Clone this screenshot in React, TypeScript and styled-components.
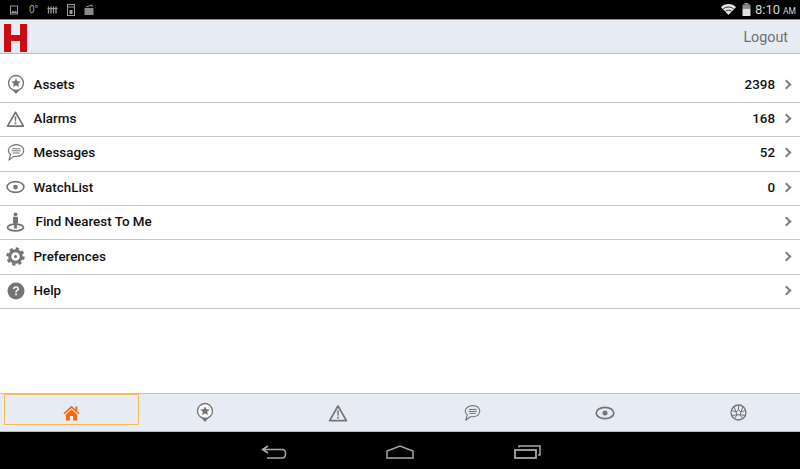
import React from 'react';
import styled, { createGlobalStyle } from 'styled-components';

const GlobalStyle = createGlobalStyle`
  html, body { margin: 0; padding: 0; background: #fff; }
  body { font-family: Roboto, "Liberation Sans", sans-serif; }
`;

const GREY = '#747474';

const PinIcon = ({ size = 18 }: { size?: number }) => (
  <svg width={size} height={size * 1.17} viewBox="0 0 18 21" fill="none">
    <path d="M9 .8a8.200 8.200 0 0 0-3.200 15.700L9 20l3.200-3.500A8.200 8.200 0 0 0 9 .8z" fill={GREY} />
    <circle cx="9" cy="9" r="6.800" fill="#fff" />
    <path d="M9 4.200l1.400 3.100 3.400.3-2.600 2.200.8 3.300L9 11.400l-3 1.700.8-3.300-2.600-2.200 3.400-.3z" fill={GREY} />
  </svg>
);

const AlertIcon = ({ size = 22 }: { size?: number }) => (
  <svg width={size} height={size * 0.9} viewBox="0 0 20 18" fill="none">
    <path d="M10 2L1.600 16.600h16.800z" stroke={GREY} strokeWidth="1.700" strokeLinejoin="round" />
    <path d="M9.100 6.600h1.800l-.3 5.200H9.400zM9.100 12.800h1.800v1.800H9.100z" fill={GREY} />
  </svg>
);

const ChatIcon = ({ size = 19 }: { size?: number }) => (
  <svg width={size} height={size} viewBox="0 0 18 18" fill="none">
    <path d="M9.800 1.600c-4.200 0-7.600 2.400-7.600 5.500 0 1.500.8 2.800 2.100 3.800l-1.500 5.300 4.600-3.500c.8.100 1.600.100 2.400 0 4.100 0 7-2.500 7-5.600s-2.800-5.500-7-5.500z" stroke={GREY} strokeWidth="1.100" strokeLinejoin="round" />
    <path d="M6 5.400h7.600M5.600 7.400h8.200M6.400 9.400h6.400" stroke={GREY} strokeWidth="1" />
  </svg>
);

const EyeIcon = ({ size = 20 }: { size?: number }) => (
  <svg width={size} height={size * 0.7} viewBox="0 0 20 14" fill="none">
    <ellipse cx="10" cy="7" rx="8.800" ry="5.700" stroke={GREY} strokeWidth="1.700" />
    <circle cx="10" cy="7" r="2.500" fill={GREY} />
  </svg>
);

const PersonPinIcon = () => (
  <svg width="19" height="20" viewBox="0 0 19 20" fill="none">
    <ellipse cx="9.500" cy="15.500" rx="8" ry="3.300" stroke={GREY} strokeWidth="1.800" />
    <circle cx="9.500" cy="2.300" r="1.900" fill={GREY} />
    <path d="M7 4.800h5v6.200h-1.100v5.500H8.100V11H7z" fill={GREY} />
  </svg>
);

const GearIcon = () => (
  <svg width="19" height="19" viewBox="0 0 19 19" fill="none">
    <circle cx="9.500" cy="9.500" r="5.800" stroke={GREY} strokeWidth="3" />
    <circle cx="9.500" cy="9.500" r="8" stroke={GREY} strokeWidth="2.400" strokeDasharray="3.200 3.083" />
    <circle cx="9.500" cy="9.500" r="1.500" fill={GREY} />
  </svg>
);

const HelpIcon = () => (
  <svg width="18" height="18" viewBox="0 0 18 18">
    <circle cx="9" cy="9" r="8.500" fill={GREY} />
    <path d="M6 7c0-1.800 1.300-2.800 3-2.800s3 1 3 2.500c0 1.200-.7 1.800-1.500 2.300-.7.500-.9.800-.9 1.500H8.300c0-1.200.3-1.800 1.200-2.400.7-.500 1-.8 1-1.300 0-.6-.6-1-1.400-1-.9 0-1.500.5-1.500 1.300z" fill="#fff" />
    <rect x="8.200" y="11.500" width="1.700" height="1.800" fill="#fff" />
  </svg>
);

const HomeIcon = () => (
  <svg width="17" height="16" viewBox="0 0 17 16">
    <path d="M8.500.8L.4 8.200l1 1.100 7.100-6.400 7.100 6.400 1-1.100-2.300-2.100V1.600h-2v2.700z" fill="#f26a0f" />
    <path d="M8.500 4.400L2.900 9.400v6.100h4v-4.400h3.200v4.400h4V9.400z" fill="#f26a0f" />
  </svg>
);

const GlobeIcon = () => (
  <svg width="17" height="17" viewBox="0 0 17 17" fill="none" stroke={GREY}>
    <circle cx="8.500" cy="8.500" r="7.500" strokeWidth="1.300" />
    <path d="M8.500 6L6 7.800l1 3h3l1-3zM8.500 1v5M6 7.800L1.500 6.500M11 7.800l4.500-1.300M7 10.800L4 15M10 10.800l3 4.200M4 2.500L6 7.800M13 2.500l-2 5.300M1.500 11.500L7 10.800M15.500 11.500l-5.500-.7" strokeWidth="1" />
  </svg>
);

const StatusIcons = () => (
  <svg width="88" height="14" viewBox="0 0 88 14" fill="none" stroke="#9b9b9b">
    <rect x="2.500" y="3" width="7" height="8" strokeWidth="1" />
    <path d="M3 10l2-2.500 1.500 1.500L8 7.500 9 10z" fill="#9b9b9b" stroke="none" />
    <path d="M40.500 3.500v7M43 3.500v7M45.500 3.500v7M48 3.500v7" strokeWidth="1.300" />
    <path d="M39.500 5.500h10" strokeWidth="1" />
    <rect x="59.500" y="1.500" width="7" height="11" strokeWidth="1" />
    <rect x="61.500" y="7" width="3" height="4" fill="#9b9b9b" stroke="none" />
    <path d="M60 4h6" strokeWidth="1" />
    <rect x="76.500" y="5" width="9" height="7" fill="#8a8a8a" stroke="none" />
    <path d="M78 4l6-2v2" strokeWidth="1" />
  </svg>
);

const Wifi = () => (
  <svg width="15" height="11" viewBox="0 0 15 11">
    <path d="M7.500 11L0 3.200C2 1.200 4.600 0 7.500 0s5.500 1.200 7.500 3.200z" fill="#e4e4e4" />
    <path d="M2.200 5.100C3.600 3.800 5.400 3 7.500 3s3.900.8 5.300 2.100M4.400 7.400C5.300 6.600 6.300 6.100 7.500 6.100s2.200.5 3.100 1.300" stroke="#000" strokeWidth=".8" fill="none" />
  </svg>
);

const Battery = () => (
  <svg width="9" height="13" viewBox="0 0 9 13">
    <rect x="2.500" y="0" width="4" height="1.500" fill="#9a9a9a" />
    <rect x="0.500" y="1.500" width="8" height="4" fill="#8c8c8c" />
    <rect x="0.500" y="5.500" width="8" height="7.500" fill="#e0e0e0" />
  </svg>
);

const NavBack = () => (
  <svg width="26" height="14" viewBox="0 0 26 14" fill="none" stroke="#a8a8a8" strokeWidth="1.500">
    <path d="M7 1L1.500 4.500 7 8M2 4.500h19.500c2.500 0 3 1.500 3 4s-.5 4.500-3 4.500H6" />
  </svg>
);

const NavHome = () => (
  <svg width="28" height="14" viewBox="0 0 28 14" fill="none" stroke="#a8a8a8" strokeWidth="1.500">
    <path d="M1 13V6L14 1l13 5v7z" />
  </svg>
);

const NavRecent = () => (
  <svg width="27" height="14" viewBox="0 0 27 14" fill="none" stroke="#a8a8a8" strokeWidth="1.500">
    <rect x="1" y="5" width="21" height="8" strokeWidth="1.800" />
    <path d="M5 2.500V1h21v9h-2" />
  </svg>
);

const Screen = styled.div`
  width: 800px;
  height: 469px;
  display: flex;
  flex-direction: column;
  overflow: hidden;
  background: #fff;
`;

const StatusBar = styled.div`
  height: 19px;
  flex: none;
  background: #000;
  display: flex;
  align-items: center;
  justify-content: space-between;
  padding: 0 4px 0 8px;
`;

const StatusLeft = styled.div`
  position: relative;
  display: flex;
  align-items: center;
`;

const Degrees = styled.span`
  position: absolute;
  left: 21px;
  top: 0;
  font-size: 10px;
  line-height: 14px;
  color: #a0a0a0;
`;

const StatusRight = styled.div`
  display: flex;
  align-items: center;
  gap: 6px;
`;

const Clock = styled.span`
  margin-left: -2px;
  font-size: 13px;
  color: #d6d6d6;
  span { font-size: 8.500px; margin-left: 3px; }
`;

const Header = styled.div`
  height: 35px;
  flex: none;
  background: #e7ebf3;
  border-top: 1px solid #8f8f8f;
  border-bottom: 1px solid #bdbdbd;
  box-sizing: border-box;
  display: flex;
  align-items: center;
  justify-content: space-between;
  padding: 0 12px 0 4px;
`;

const Logo = styled.div`
  width: 23px;
  height: 28px;
  margin-top: 3px;
  background: linear-gradient(#cc0a14, #cc0a14) center / 100% 6px no-repeat;
  border-left: 7px solid #cc0a14;
  border-right: 7px solid #cc0a14;
  box-sizing: border-box;
`;

const Logout = styled.span`
  font-size: 14.300px;
  color: #6e6e6e;
`;

const List = styled.div`
  flex: 1;
  min-height: 0;
  padding-top: 14.500px;
`;

const Row = styled.div`
  height: 34.400px;
  box-sizing: border-box;
  border-bottom: 1px solid #c6c6c6;
  display: flex;
  align-items: center;
  padding: 0 7px 2px 6px;
`;

const IconCell = styled.div`
  width: 19px;
  flex: none;
  display: flex;
  justify-content: center;
`;

const Label = styled.span<{ $indent?: number }>`
  margin-left: ${p => 8.5 + (p.$indent || 0)}px;
  font-size: 13.400px;
  font-weight: 500;
  color: #111;
  flex: 1;
`;

const Count = styled.span`
  font-size: 13.400px;
  font-weight: 500;
  color: #111;
  margin-right: 8px;
`;

const Chevron = styled.i`
  width: 5px;
  height: 5px;
  margin-right: 3px;
  border-top: 2.500px solid #808080;
  border-right: 2.500px solid #808080;
  transform: rotate(45deg);
`;

const TabBar = styled.div`
  height: 39px;
  flex: none;
  box-sizing: border-box;
  background: #e7ebf3;
  border-top: 1px solid #c2c2c2;
  border-bottom: 1px solid #b8b8b8;
  display: grid;
  grid-template-columns: repeat(6, 133.400px);
  padding-left: 5px;
`;

const Tab = styled.div<{ $active?: boolean }>`
  display: flex;
  align-items: center;
  justify-content: center;
  box-sizing: border-box;
  height: 31px;
  padding-top: 6px;
  margin: ${p => (p.$active ? '0 -1px' : '0')};
  border: 1px solid ${p => (p.$active ? '#f5b95a' : 'transparent')};
  border-radius: 1px;
`;

const NavBar = styled.div`
  height: 37px;
  flex: none;
  box-sizing: border-box;
  background: #000;
  display: flex;
  align-items: center;
  justify-content: center;
  gap: 99.500px;
  padding: 2px 0 0 1px;
`;

const rows = [
  { label: 'Assets', count: '2398', icon: <PinIcon /> },
  { label: 'Alarms', count: '168', icon: <AlertIcon /> },
  { label: 'Messages', count: '52', icon: <ChatIcon /> },
  { label: 'WatchList', count: '0', icon: <EyeIcon /> },
  { label: 'Find Nearest To Me', icon: <PersonPinIcon />, indent: 2 },
  { label: 'Preferences', icon: <GearIcon /> },
  { label: 'Help', icon: <HelpIcon /> },
];

export default function App() {
  return (
    <Screen>
      <GlobalStyle />
      <StatusBar>
        <StatusLeft>
          <StatusIcons />
          <Degrees>0°</Degrees>
        </StatusLeft>
        <StatusRight>
          <Wifi />
          <Battery />
          <Clock>8:10<span>AM</span></Clock>
        </StatusRight>
      </StatusBar>
      <Header>
        <Logo />
        <Logout>Logout</Logout>
      </Header>
      <List>
        {rows.map(r => (
          <Row key={r.label}>
            <IconCell>{r.icon}</IconCell>
            <Label $indent={r.indent}>{r.label}</Label>
            {r.count && <Count>{r.count}</Count>}
            <Chevron />
          </Row>
        ))}
      </List>
      <TabBar>
        <Tab $active><HomeIcon /></Tab>
        <Tab><PinIcon size={18} /></Tab>
        <Tab><AlertIcon size={20} /></Tab>
        <Tab><ChatIcon size={18} /></Tab>
        <Tab><EyeIcon /></Tab>
        <Tab><GlobeIcon /></Tab>
      </TabBar>
      <NavBar>
        <NavBack />
        <NavHome />
        <NavRecent />
      </NavBar>
    </Screen>
  );
}
